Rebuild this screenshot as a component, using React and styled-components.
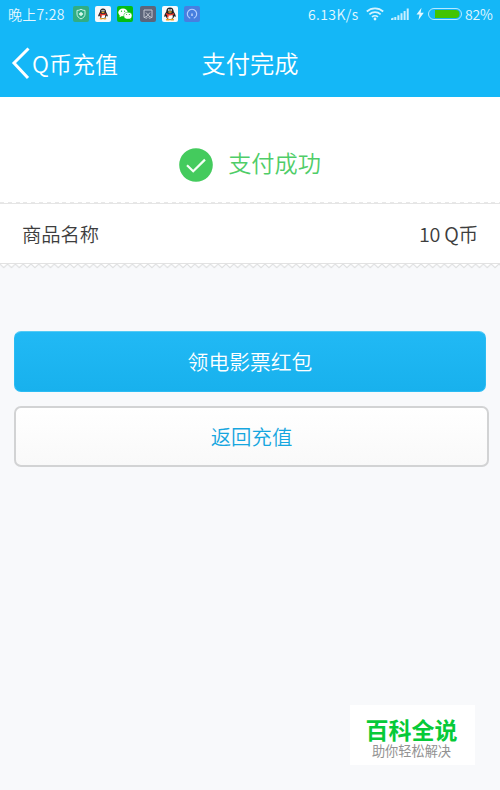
import styled, { createGlobalStyle } from 'styled-components';

export default function App() {
  return (
    <>
      <GlobalStyle />
      <Screen>
        <StatusBar>
          <StatusText $width={57} $spacing="0.3px">
            晚上7:28
          </StatusText>
          <AppIcons>
            <ShieldIcon />
            <PenguinIcon />
            <ChatIcon />
            <ScreenshotIcon />
            <PenguinIcon large />
            <GaugeIcon />
          </AppIcons>
          <DeviceStatus>
            <StatusText $width={51} $spacing="0.4px">
              6.13K/s
            </StatusText>
            <WifiIcon />
            <SignalIcon />
            <BatteryIcon />
            <StatusText $width={27}>82%</StatusText>
          </DeviceStatus>
        </StatusBar>

        <Header>
          <BackButton>
            <svg width="20" height="34" viewBox="0 0 20 34" fill="none">
              <path d="M17.5 2.5 3 17 17 32" stroke="#fff" strokeWidth="3" />
            </svg>
            <span>Q币充值</span>
          </BackButton>
          <Title>支付完成</Title>
        </Header>

        <Result>
          <svg width="34" height="34" viewBox="0 0 34 34" fill="none">
            <circle cx="17" cy="17" r="16.8" fill="#44cb5d" />
            <path
              d="m8 17.2 6.2 6L26 11.6"
              stroke="#f4fff5"
              strokeWidth="2.2"
            />
          </svg>
          <ResultText>支付成功</ResultText>
        </Result>
        <DashedEdge />
        <ProductRow>
          <span>商品名称</span>
          <ProductValue>10 Q币</ProductValue>
        </ProductRow>
        <ZigzagEdge />

        <Actions>
          <PrimaryButton>领电影票红包</PrimaryButton>
          <SecondaryButton>返回充值</SecondaryButton>
        </Actions>

        <Brand>
          <BrandName>百科全说</BrandName>
          <BrandSlogan>助你轻松解决</BrandSlogan>
        </Brand>
      </Screen>
    </>
  );
}

function ZigzagEdge() {
  return (
    <EdgeSvg width="500" height="6" fill="none">
      <defs>
        <pattern
          id="teeth"
          x="-0.2"
          width="7.8"
          height="6"
          patternUnits="userSpaceOnUse"
        >
          <path d="M0 0v1l3.900 3.700L7.800 1V0Z" fill="#fff" />
          <path
            d="M-1 .1 3.900 4.700 8.800 .1"
            stroke="#dedfe0"
            strokeWidth="1.100"
          />
        </pattern>
      </defs>
      <rect width="500" height="6" fill="url(#teeth)" />
      <path d="M0 .5h500" stroke="#e2e2e2" />
    </EdgeSvg>
  );
}

function ShieldIcon() {
  return (
    <svg width="16" height="16" viewBox="0 0 16 16" fill="none">
      <rect width="16" height="16" rx="2" fill="#31ad83" />
      <path
        d="M8 3.200c1.400 1 2.700 1.200 4 1.200v3.700c0 2.200-1.600 3.800-4 4.800-2.400-1-4-2.600-4-4.800V4.400c1.300 0 2.600-.2 4-1.200Z"
        stroke="#c5f4e5"
        strokeWidth="1"
      />
      <path d="M8 6v4M6 8h4" stroke="#e6fff6" strokeWidth="1.300" />
    </svg>
  );
}

function PenguinIcon({ large }) {
  return (
    <svg width="16" height="16" viewBox="0 0 16 16">
      <rect width="16" height="16" rx="2" fill="#f7f9fb" />
      <g
        transform={
          large ? 'translate(8 8) scale(1.2) translate(-8 -8)' : undefined
        }
      >
        <path
          d="M8 2.500c-2 0-3.100 1.300-3.100 3.400C4.300 7.400 3 8.700 3.200 10.300c.5.300 1-.2 1.300-.7.500 2.200 1.700 3.100 3.500 3.100s3-.9 3.500-3.100c.3.500.8 1 1.300.7.200-1.600-1.100-2.900-1.700-4.400C11.100 3.800 10 2.500 8 2.500Z"
          fill="#202329"
        />
        <ellipse cx="8" cy="10" rx="2.300" ry="2.300" fill="#fff" />
        <ellipse cx="7.100" cy="4.700" rx=".65" ry=".9" fill="#fff" />
        <ellipse cx="8.900" cy="4.700" rx=".65" ry=".9" fill="#fff" />
        <ellipse cx="8" cy="6.300" rx="1.700" ry=".6" fill="#f7ac22" />
        <path
          d="M4.800 7.200c2 1.100 4.400 1.100 6.400 0l.3 1.200c-1.600.8-3.300 1-4.700.8v1.700l-1.300-.2V8.900l-1-.5Z"
          fill="#e8372b"
        />
        <ellipse cx="6.200" cy="12.700" rx="1.700" ry=".7" fill="#f0a31e" />
        <ellipse cx="9.800" cy="12.700" rx="1.700" ry=".7" fill="#f0a31e" />
      </g>
    </svg>
  );
}

function ChatIcon() {
  return (
    <svg width="16" height="16" viewBox="0 0 16 16">
      <rect width="16" height="16" rx="2" fill="#04bd13" />
      <ellipse cx="6" cy="6.400" rx="4.700" ry="3.900" fill="#fff" />
      <path d="m2.800 8.800-.2 2.400 2.400-1.200ZM12.200 12l1.200 1.800-.1-2.800Z" fill="#fff" />
      <ellipse
        cx="10.900"
        cy="9.700"
        rx="4.100"
        ry="3.400"
        fill="#fff"
        stroke="#04bd13"
        strokeWidth=".5"
      />
      <g fill="#04bd13">
        <circle cx="4.500" cy="5.200" r=".6" />
        <circle cx="7.600" cy="5.200" r=".6" />
        <circle cx="9.600" cy="8.600" r=".5" />
        <circle cx="12.300" cy="8.600" r=".5" />
      </g>
    </svg>
  );
}

function ScreenshotIcon() {
  return (
    <svg width="16" height="16" viewBox="0 0 16 16" fill="none">
      <rect width="16" height="16" rx="2" fill="#5d657a" />
      <path
        d="M5 11.500H4v-7.500h8v7.500h-1M6 6.500l4 4.500M10 6.500 6 11"
        stroke="#c3c7d1"
        strokeWidth="1"
      />
      <circle cx="6.200" cy="11.400" r="1" stroke="#c3c7d1" strokeWidth=".8" />
      <circle cx="9.800" cy="11.400" r="1" stroke="#c3c7d1" strokeWidth=".8" />
    </svg>
  );
}

function GaugeIcon() {
  return (
    <svg width="16" height="16" viewBox="0 0 16 16" fill="none">
      <rect width="16" height="16" rx="2" fill="#477fe0" />
      <path
        d="M6.200 12.300a4.700 4.700 0 1 1 3.600 0"
        stroke="#b8d2ff"
        strokeWidth="1.100"
      />
      <path d="M8 7.500v2.500" stroke="#dce9ff" strokeWidth="1.200" />
    </svg>
  );
}

function WifiIcon() {
  return (
    <svg width="18" height="14" viewBox="0 0 18 14" fill="none">
      <path
        d="M.8 4.500c4.700-4.300 11.700-4.300 16.400 0M3.400 7.300c3.200-3 8-3 11.200 0M6 10c1.700-1.600 4.300-1.600 6 0"
        stroke="#d5f3ff"
        strokeWidth="1.700"
      />
      <circle cx="9" cy="12" r="1.400" fill="#e0f6ff" />
    </svg>
  );
}

function SignalIcon() {
  return (
    <svg width="18" height="12" viewBox="0 0 18 12" fill="#c9efff">
      <path d="M0 10.500 2.500 9.500V12H0ZM3.300 9h2v3h-2ZM6.400 7.200h2V12h-2ZM9.500 5.200h2V12h-2ZM12.600 3h2v9h-2ZM15.700.5h2V12h-2Z" />
    </svg>
  );
}

function BatteryIcon() {
  return (
    <svg width="46" height="14" viewBox="0 0 46 14" fill="none">
      <path d="M5.500.8.5 7.500h3L2.500 13l5.300-7.200H4.600Z" fill="#e2f7ff" />
      <rect
        x="12.500"
        y="1.500"
        width="33"
        height="11"
        rx="5.500"
        stroke="#b6e9ff"
      />
      <path d="M19 3h20.500a4 4 0 0 1 0 8H19Z" fill="#42c402" />
    </svg>
  );
}

const GlobalStyle = createGlobalStyle`
  * {
    box-sizing: border-box;
  }

  body {
    margin: 0;
    font-family: 'Noto Sans CJK SC', sans-serif;
    font-weight: 350;
  }
`;

const Screen = styled.main`
  position: relative;
  width: 500px;
  height: 790px;
  overflow: hidden;
  background: #f8f9fb;
  white-space: nowrap;
`;

const StatusBar = styled.div`
  display: flex;
  align-items: center;
  height: 28px;
  padding: 0 8px;
  background: #14b7f7;
`;

const StatusText = styled.span`
  width: ${({ $width }) => $width}px;
  letter-spacing: ${({ $spacing }) => $spacing || '-0.2px'};
  color: #e4f7ff;
  font-size: 14px;
  line-height: 28px;
`;

const AppIcons = styled.div`
  display: flex;
  gap: 6.2px;
  margin-left: 8px;
`;

const DeviceStatus = styled.div`
  display: flex;
  align-items: center;
  gap: 7px;
  margin-left: auto;

  ${StatusText}:last-child {
    margin-left: -4px;
  }
`;

const Header = styled.header`
  display: grid;
  grid-template-columns: 150px 200px 150px;
  align-items: center;
  height: 69px;
  background: #14b7f7;
  color: #fff;
`;

const BackButton = styled.div`
  display: flex;
  align-items: center;
  gap: 1px;
  padding-left: 11px;
  font-size: 23px;
  line-height: 34px;
`;

const Title = styled.h1`
  margin: 0;
  text-align: center;
  font-size: 24.3px;
  font-weight: inherit;
  line-height: 34px;
`;

const Result = styled.section`
  display: flex;
  justify-content: center;
  align-items: flex-start;
  gap: 15px;
  height: 105px;
  padding-top: 51px;
  background: #fff;
`;

const ResultText = styled.span`
  margin-top: -3px;
  color: #4fcd68;
  font-size: 23.2px;
  line-height: 34px;
`;

const DashedEdge = styled.div`
  height: 2px;
  border-bottom: 1px solid #e5e5e5;
  background: repeating-linear-gradient(
    90deg,
    #e8e8e8 0 4px,
    #fff 4px 7.8px
  );
`;

const ProductRow = styled.div`
  display: flex;
  justify-content: space-between;
  align-items: center;
  height: 59px;
  padding: 0 22px;
  background: #fff;
  color: #3d3d3d;
  font-size: 19.3px;
`;

const ProductValue = styled.span`
  font-size: 19.8px;
  letter-spacing: -0.3px;
`;

const EdgeSvg = styled.svg`
  display: block;
`;

const Actions = styled.div`
  display: flex;
  flex-direction: column;
  gap: 14px;
  padding: 61.6px 11px 0 14px;
`;

const Button = styled.button`
  height: 61px;
  padding: 0;
  border-radius: 7px;
  font-family: inherit;
  font-weight: inherit;
`;

const PrimaryButton = styled(Button)`
  margin-right: 3px;
  border: 1px solid #2bbcf3;
  border-top-color: #55cbf5;
  background: linear-gradient(#21b9f5, #18b1ed);
  color: #fff;
  font-size: 20.8px;
`;

const SecondaryButton = styled(Button)`
  border: 2px solid #d2d3d4;
  background: linear-gradient(#fff, #f9f9f9);
  color: #16a6df;
  font-size: 20.4px;
`;

const Brand = styled.aside`
  position: absolute;
  top: 705px;
  left: 350px;
  display: flex;
  flex-direction: column;
  align-items: center;
  width: 125px;
  height: 60px;
  padding: 10px 2px 0 0;
  background: #fff;
`;

const BrandName = styled.strong`
  color: #06ca38;
  font-size: 23px;
  font-weight: 700;
  line-height: 28px;
`;

const BrandSlogan = styled.span`
  color: #929292;
  font-size: 13.2px;
  font-weight: 400;
  line-height: 16px;
`;
